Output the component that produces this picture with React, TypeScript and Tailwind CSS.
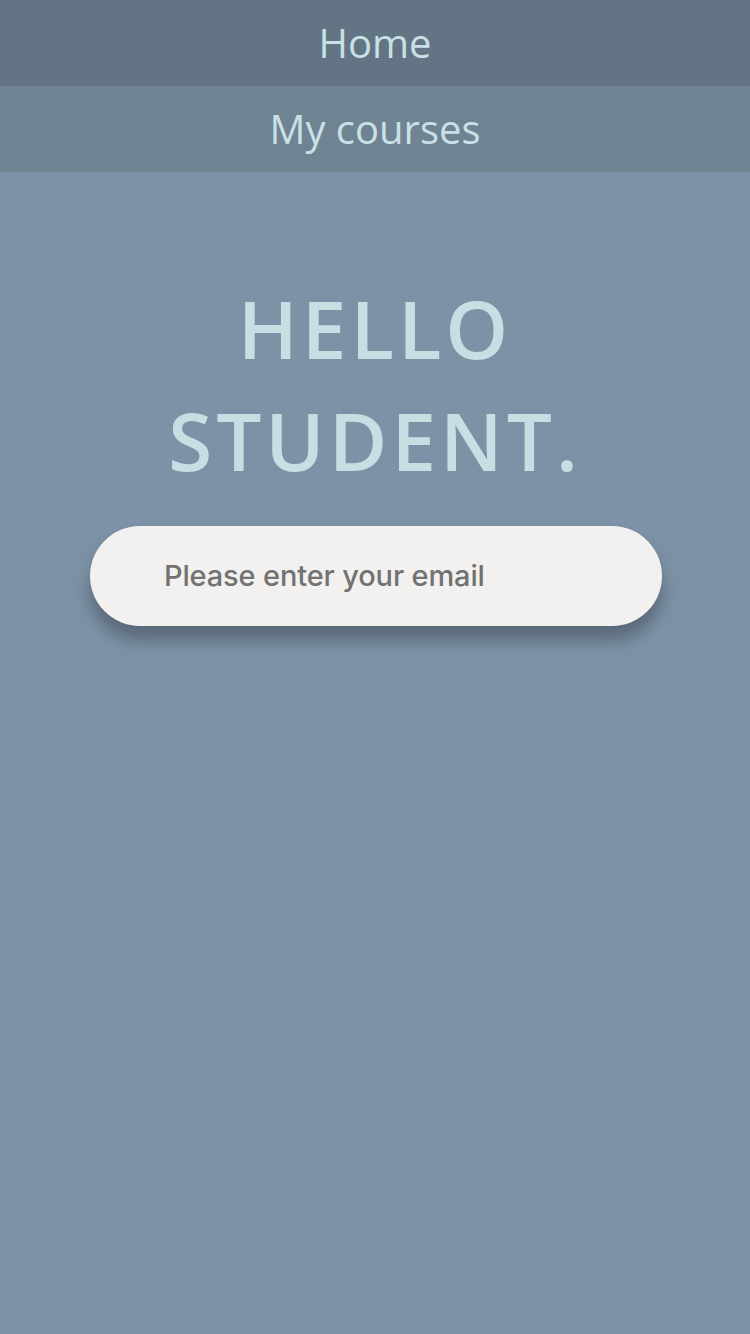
import React from "react";

export default function App() {
  return (
    <div className="min-h-[1334px] w-[750px] bg-[#7d92a7] font-['Open_Sans',sans-serif]">
      <nav>
        <div className="flex h-[86px] items-center justify-center bg-[#637484] text-[40px] text-[#c9e0e6]">Home</div>
        <div className="flex h-[86px] items-center justify-center bg-[#6f8393] text-[40px] text-[#c9e0e6]">My courses</div>
      </nav>
      <main className="flex flex-col items-center pt-[100px]">
        <h1 className="text-center text-[80px] font-semibold uppercase leading-[112px] tracking-[0.05em] text-[#c6dfe3]">
          Hello
          <br />
          Student.
        </h1>
        <div className="mt-[30px] ml-[2px] flex h-[100px] w-[572px] items-center rounded-full bg-[#f2f1ef] pl-[74px] shadow-[0_14px_16px_rgba(55,65,75,0.5)]">
          <input
            className="w-full bg-transparent font-['Inter',sans-serif] text-[29px] font-medium tracking-[-0.005em] text-[#727272] outline-none placeholder:text-[#727272]"
            placeholder="Please enter your email"
          />
        </div>
      </main>
    </div>
  );
}
